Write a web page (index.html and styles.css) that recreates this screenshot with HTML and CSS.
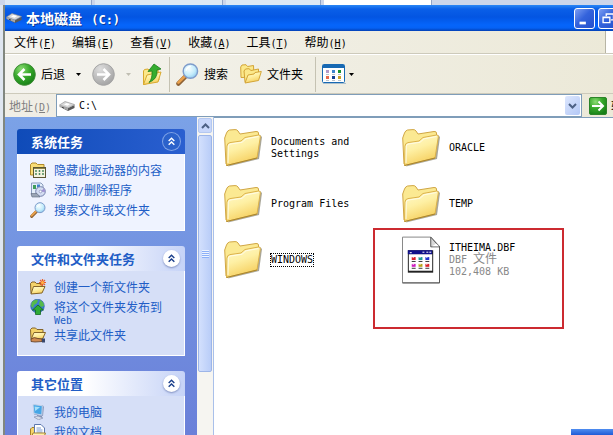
FILE: index.html
```html
<!DOCTYPE html>
<html lang="zh-CN">
  <head>
    <meta charset="utf-8" />
    <title>本地磁盘 (C:)</title>
    <link rel="stylesheet" href="styles.css">
  </head>
  <body>
    <!-- Shared icons -->
    <svg class="defs" width="0" height="0" aria-hidden="true">
      <defs>
        <linearGradient id="yellow" x1="0" y1="0" x2="0.4" y2="1">
          <stop offset="0" stop-color="#fffad0" />
          <stop offset="0.5" stop-color="#fef0a4" />
          <stop offset="1" stop-color="#f6d060" />
        </linearGradient>
        <radialGradient id="green" cx="0.35" cy="0.25" r="0.8">
          <stop offset="0" stop-color="#8bdc73" />
          <stop offset="0.5" stop-color="#37a82b" />
          <stop offset="1" stop-color="#167f16" />
        </radialGradient>
        <radialGradient id="gray" cx="0.35" cy="0.25" r="0.8">
          <stop offset="0" stop-color="#dedede" />
          <stop offset="0.6" stop-color="#bababa" />
          <stop offset="1" stop-color="#a2a2a2" />
        </radialGradient>
        <radialGradient id="glass" cx="0.4" cy="0.35" r="0.7">
          <stop offset="0" stop-color="#f6fdff" />
          <stop offset="0.6" stop-color="#c4ecfb" />
          <stop offset="1" stop-color="#8cc8ee" />
        </radialGradient>
        <symbol id="folder" viewBox="0 0 38 38">
          <path d="M4 37.500 L35 30 L38 8 L36 6 Z" fill="#6f6a55" opacity="0.6" />
          <path d="M2 35 L0.700 9 L2.500 4 Q3.500 1.500 5.500 1 L11 0.600 Q13 0.500 14 2 L16 5 L32 2.500 Q34.500 2.300 34.500 4 L34.500 9 L31 28 Z" fill="#fbe992" stroke="#d0a645" />
          <path d="M2.500 36.500 L3 17 Q3.200 14 6 13.600 L17 12 L21 8.500 L34.500 6 Q36.700 5.700 36.300 8 L33 29 Z" fill="url(#yellow)" stroke="#dcb24a" />
          <path d="M4 34 L4.300 17 Q4.700 15.200 7 14.900 L18 13.300 L22 9.800 L34.500 7.500" fill="none" stroke="#fffce6" />
          <path d="M2.500 36.500 L33 29" stroke="#a8842e" />
        </symbol>
        <symbol id="drive" viewBox="0 0 16 12">
          <path d="M0.500 6 L6 9.500 L9 11 L15.500 8 L15.500 5 L9 8 Z" fill="#595959" />
          <path d="M0.500 5 L6 1.500 L15.500 4.500 L9 8 Z" fill="#d8d8d8" stroke="#8b8b8b" stroke-width="0.600" />
          <path d="M0.500 5 L9 8 L9 10.500 L0.500 7 Z" fill="#a7a7a7" />
          <path d="M5 4.500 L7.500 3 L11 4 L8.500 5.700 Z" fill="#fff" />
          <path d="M3 7.300 L5 8.100" stroke="#444" />
        </symbol>
        <symbol id="search" viewBox="0 0 24 24">
          <path d="M2.500 21.500 L9.500 14.500" stroke="#8d6134" stroke-width="4.500" stroke-linecap="round" />
          <path d="M2.500 20.500 L9.500 13.500" stroke="#e9a04c" stroke-width="2.800" stroke-linecap="round" />
          <circle cx="15" cy="8.500" r="7.500" fill="url(#glass)" stroke="#7f9ccb" stroke-width="1.500" />
          <path d="M10.500 8 Q11.500 4 15.500 3.500" fill="none" stroke="#fff" stroke-width="1.500" />
        </symbol>
        <symbol id="down" viewBox="0 0 5 3">
          <path d="M0 0 H5 L2.500 3 Z" fill="currentColor" />
        </symbol>
        <symbol id="collapse" viewBox="0 0 18 18">
          <path d="M6 8.500 L9 5.500 L12 8.500 M6 12.500 L9 9.500 L12 12.500" fill="none" stroke="currentColor" stroke-width="1.500" />
        </symbol>
      </defs>
    </svg>

    <div class="tabs">
      <span class="tab tab-first"></span>
      <span class="tab tab-wide"></span>
      <span class="tab"></span>
      <span class="tab active"></span>
    </div>

    <div class="window">
      <header class="titlebar">
        <svg class="title-icon"><use href="#drive" /></svg>
        <h1>本地磁盘 <span class="title-drive">(C:)</span></h1>
        <button class="win-btn" aria-label="最小化">
          <svg viewBox="0 0 21 21"><path d="M5 14 h7 v3 h-7 z" fill="#fff" /></svg>
        </button>
        <button class="win-btn" aria-label="还原">
          <svg viewBox="0 0 21 21">
            <path d="M8 8 V5.500 H16 V12 H13" fill="none" stroke="#fff" stroke-width="1.500" />
            <path d="M4.500 9 H12 V15 H4.500 Z M4.500 9.500 H12" fill="none" stroke="#fff" stroke-width="1.500" />
          </svg>
        </button>
      </header>

      <nav class="menubar">
        <button>文件<span class="latin">(<u>F</u>)</span></button>
        <button>编辑<span class="latin">(<u>E</u>)</span></button>
        <button>查看<span class="latin">(<u>V</u>)</span></button>
        <button>收藏<span class="latin">(<u>A</u>)</span></button>
        <button>工具<span class="latin">(<u>T</u>)</span></button>
        <button>帮助<span class="latin">(<u>H</u>)</span></button>
        <span class="brand"></span>
      </nav>

      <div class="toolbar">
        <button class="tool">
          <svg class="nav-icon" viewBox="0 0 23 23">
            <circle cx="11.500" cy="11.500" r="10.800" fill="url(#green)" stroke="#3d8c35" />
            <path d="M18 11.500 H6 M11.500 6 L6 11.500 L11.500 17" fill="none" stroke="#fff" stroke-width="2.600" />
          </svg>
          后退
        </button>
        <button class="drop" aria-label="后退列表"><svg><use href="#down" /></svg></button>
        <button class="tool" aria-label="前进" disabled>
          <svg class="nav-icon" viewBox="0 0 23 23">
            <circle cx="11.500" cy="11.500" r="10.800" fill="url(#gray)" stroke="#a5a5a5" />
            <path d="M5 11.500 H17 M11.500 6 L17 11.500 L11.500 17" fill="none" stroke="#fff" stroke-width="2.600" />
          </svg>
        </button>
        <button class="drop" aria-label="前进列表" disabled><svg><use href="#down" /></svg></button>
        <button class="tool" aria-label="向上">
          <svg class="up-icon" viewBox="0 0 21 23">
            <path d="M1.500 21.500 L1.500 8 L2.500 6.500 L6 6 L8 8 L16 6.500 L17 17 Z" fill="#fbe88a" stroke="#d9a92e" />
            <path d="M1.500 21.500 L5 12 L19 9 L16 19 Z" fill="url(#yellow)" stroke="#d9a92e" />
            <path d="M7 19.500 Q10.500 16 10 8 L6 8.500 L12 1 L19 6 L15 7 Q16 16 7 19.500 Z" fill="#35ad2f" stroke="#1b7c1a" stroke-width="0.800" />
          </svg>
        </button>
        <span class="sep"></span>
        <button class="tool">
          <svg class="search-icon"><use href="#search" /></svg>
          搜索
        </button>
        <button class="tool folders">
          <svg class="folders-icon" viewBox="0 0 22 20">
            <path d="M1 13.500 L0.700 3 L2 1 L6 0.700 L7.500 2.500 L13.500 1.500 L14 13 Z" fill="#fbe88a" stroke="#d3a436" />
            <path d="M5 18 L4 7 L5.500 5 L9 4.700 L11 6.500 L18.500 5 L18.500 15 Z" fill="#fbe88a" stroke="#d3a436" />
            <path d="M5 19 L8 11 L14 10 L15 8.500 L21.300 7.500 L18.500 16.500 Z" fill="url(#yellow)" stroke="#d3a436" />
          </svg>
          文件夹
        </button>
        <span class="sep"></span>
        <button class="tool" aria-label="查看方式">
          <svg class="views-icon" viewBox="0 0 24 20">
            <rect x="0.500" y="0.500" width="22" height="18" rx="1" fill="#fff" stroke="#1769b3" />
            <path d="M1 1 h21 v3 H1 z" fill="#1769b3" />
            <path d="M1 19.500 H24" stroke="#a9bfce" />
            <path d="M4 6 h3 v3 h-3 z" fill="#b39ac8" />
            <path d="M10 6 h3 v3 h-3 z" fill="#3d86cf" />
            <path d="M16 6 h3 v3 h-3 z" fill="#179333" />
            <path d="M4 12 h3 v3 h-3 z" fill="#e76a4c" />
            <path d="M10 12 h3 v3 h-3 z" fill="#123f91" />
            <path d="M16 12 h3 v3 h-3 z" fill="#c9a02a" />
            <path d="M4 10.500 h3 M10 10.500 h3 M16 10.500 h3 M4 16.500 h3 M10 16.500 h3 M16 16.500 h3" stroke="#b9c3cc" />
          </svg>
        </button>
        <button class="drop small" aria-label="查看方式列表"><svg><use href="#down" /></svg></button>
      </div>

      <div class="addressbar">
        <label for="address">地址<span class="latin">(<u>D</u>)</span></label>
        <div class="combo">
          <svg class="combo-icon"><use href="#drive" /></svg>
          <input type="text" id="address" value="C:\" />
          <button class="combo-btn" aria-label="展开">
            <svg viewBox="0 0 9 6"><path d="M1 1 L4.500 4.500 L8 1" fill="none" stroke="#4d6185" stroke-width="2" /></svg>
          </button>
        </div>
        <button class="go">
          <svg viewBox="0 0 18 18">
            <rect x="0.500" y="0.500" width="17" height="17" rx="1.500" fill="url(#green)" stroke="#2c8428" />
            <path d="M3 9 H14 M9.500 4.500 L14 9 L9.500 13.500" fill="none" stroke="#fff" stroke-width="2" />
          </svg>
          转到
        </button>
      </div>

      <div class="main">
        <aside class="sidebar">
          <section class="panel primary">
            <header>
              <h2>系统任务</h2>
              <button class="collapse" aria-label="折叠"><svg><use href="#collapse" /></svg></button>
            </header>
            <ul>
              <li>
                <svg viewBox="0 0 16 16">
                  <path d="M0.500 13 V2.500 L2 1 H6 L7.500 2.500 H14 V13 Z" fill="#f9dd76" stroke="#b08a2c" />
                  <rect x="3.500" y="5.500" width="12" height="10" fill="#f5f3df" stroke="#5d5734" />
                  <path d="M4 6.500 H15" stroke="#8f8648" />
                  <path d="M6 8 v6 M9.500 8 v6 M13 8 v6" stroke="#4f8c60" stroke-width="1.500" stroke-dasharray="2 1" />
                </svg>
                <a href="#">隐藏此驱动器的内容</a>
              </li>
              <li>
                <svg viewBox="0 0 16 16">
                  <path d="M1.500 1 H11 L13 3 V13 H1.500 Z" fill="#e4eefa" stroke="#8b9dbd" />
                  <path d="M3 3 h3 v4 h-3 z" fill="#3f9d5a" />
                  <path d="M7 2.500 h3 v3 h-3 z" fill="#3f83cf" />
                  <circle cx="10.500" cy="9.500" r="4.800" fill="#d3dcf1" stroke="#7581ac" />
                  <path d="M10.500 9.500 L14 6.500 A4.500 4.500 0 0 1 15 10 Z" fill="#9f90d2" />
                  <circle cx="10.500" cy="9.500" r="1.300" fill="#fff" stroke="#7581ac" stroke-width="0.600" />
                  <path d="M1 11.500 h6 l3 3.500 h-8 z" fill="#9ba5b5" stroke="#5d687c" stroke-width="0.600" />
                </svg>
                <a href="#">添加<span class="latin">/</span>删除程序</a>
              </li>
              <li>
                <svg><use href="#search" /></svg>
                <a href="#">搜索文件或文件夹</a>
              </li>
            </ul>
          </section>

          <section class="panel">
            <header>
              <h2>文件和文件夹任务</h2>
              <button class="collapse" aria-label="折叠"><svg><use href="#collapse" /></svg></button>
            </header>
            <ul>
              <li>
                <svg viewBox="0 0 16 16">
                  <path d="M1 14.500 L0.500 4.500 L2 3 H5 L6.500 4.500 H12 V13 Z" fill="#f4d36a" stroke="#85652a" />
                  <path d="M1 15 L3.500 7.500 H15 L12 14 Z" fill="url(#yellow)" stroke="#85652a" />
                  <path d="M12.500 0 V7 M9 3.500 H16 M10 1 L15 6 M15 1 L10 6" stroke="#e8602a" stroke-width="1.200" />
                  <circle cx="12.500" cy="3.500" r="1.500" fill="#ffb347" />
                </svg>
                <a href="#">创建一个新文件夹</a>
              </li>
              <li>
                <svg viewBox="0 0 16 16">
                  <circle cx="7.500" cy="7" r="6.800" fill="#3c7ed0" stroke="#22529a" stroke-width="0.600" />
                  <path d="M2 3 Q5 0 8 1 L7 4 L4 6 L3 9 L1 7 Z M10 1 Q14 3 14 7 L11 8 L9 5 Z" fill="#56bb4a" />
                  <path d="M8 6 L13.500 11 H10.500 V15.500 H5.500 V11 H2.500 Z" fill="#2eaa36" stroke="#126a20" stroke-width="0.800" />
                </svg>
                <a href="#">将这个文件夹发布到<span class="latin"> Web</span></a>
              </li>
              <li>
                <svg viewBox="0 0 16 16">
                  <path d="M1 12 L0.500 2.500 L2 1 H5.500 L7 2.500 H13 V11 Z" fill="#f4d36a" stroke="#85652a" />
                  <path d="M1 12.500 L4 5.500 H15.500 L12.500 12 Z" fill="url(#yellow)" stroke="#85652a" />
                  <path d="M1 12 Q4 9.500 8 11.500 L12 12 V14.500 L5 15 L1 14.500 Z" fill="#cf8a4f" stroke="#5a3a22" stroke-width="0.800" />
                  <path d="M12 11.500 h3 v4 h-3 z" fill="#39476c" />
                </svg>
                <a href="#">共享此文件夹</a>
              </li>
            </ul>
          </section>

          <section class="panel">
            <header>
              <h2>其它位置</h2>
              <button class="collapse" aria-label="折叠"><svg><use href="#collapse" /></svg></button>
            </header>
            <ul>
              <li>
                <svg viewBox="0 0 16 16">
                  <path d="M3 0.500 L13 1.500 L14 3 L13 12 L4 10.500 Z" fill="#8c9cc0" />
                  <path d="M3 0.500 L12.300 1.700 L11.800 11 L4 9.500 Z" fill="#46a6e6" stroke="#c3d2ea" />
                  <path d="M4.500 2.500 L10 3.200 L5.200 7 Z" fill="#a6e0fa" />
                  <path d="M7 11 L12 12 V14 L7 13 Z" fill="#8593b8" />
                  <path d="M4 13 L8 12 L13 14 L8.500 15.800 Z" fill="#d5dbe8" stroke="#7887a8" stroke-width="0.600" />
                </svg>
                <a href="#">我的电脑</a>
              </li>
              <li>
                <svg viewBox="0 0 16 16">
                  <path d="M0.500 14 V5 L2 3.500 H5 V14 Z" fill="#f7d56b" stroke="#a3802c" />
                  <path d="M4.500 0.500 H11 L14.500 4 V12 H4.500 Z" fill="#fff" stroke="#5d78ae" />
                  <path d="M6.500 4 H11 M6.500 6 H12.500 M6.500 8 H12.500" stroke="#7c9bd0" />
                  <path d="M1 14.500 L3 9 H15.500 L13.500 14.500 Z" fill="url(#yellow)" stroke="#a3802c" />
                </svg>
                <a href="#">我的文档</a>
              </li>
            </ul>
          </section>
        </aside>

        <div class="scrollbar">
          <button class="scroll-up" aria-label="向上滚动">
            <svg viewBox="0 0 9 6"><path d="M1 5 L4.500 1.500 L8 5" fill="none" stroke="#4d6185" stroke-width="2" /></svg>
          </button>
          <div class="thumb"><span class="grip"></span></div>
        </div>

        <main class="files">
          <ul class="file-grid">
            <li>
              <svg class="folder"><use href="#folder" /></svg>
              <span class="name">Documents and Settings</span>
            </li>
            <li>
              <svg class="folder"><use href="#folder" /></svg>
              <span class="name">ORACLE</span>
            </li>
            <li>
              <svg class="folder"><use href="#folder" /></svg>
              <span class="name">Program Files</span>
            </li>
            <li>
              <svg class="folder"><use href="#folder" /></svg>
              <span class="name">TEMP</span>
            </li>
            <li>
              <svg class="folder"><use href="#folder" /></svg>
              <span class="name focused">WINDOWS</span>
            </li>
            <li>
              <svg class="doc" viewBox="0 0 39 48">
                <path d="M0.500 0.500 H29.500 L38.500 10 V47.500 H0.500 Z" fill="#fff" stroke="#858585" />
                <path d="M38.500 10 V47.500 H0.500" fill="none" stroke="#555" />
                <path d="M29.500 0.500 V10.500 H38.500 Z" fill="#d9d9d9" stroke="#555" />
                <path d="M31 10 L38 10 L35 7 Z" fill="#fff" />
                <rect x="6" y="14" width="26" height="23" fill="#222" />
                <rect x="7" y="18" width="24" height="17" fill="#fff" />
                <path d="M6 14 h25 v4 h-25 z" fill="#10108a" />
                <path d="M8 16.500 h2 M21 16 h2 M25 16 h2 M28 16 h2" stroke="#fff" />
                <path d="M10 21 h4 v3 h-4 z" fill="#d9222a" />
                <path d="M17 21 h4 v3 h-4 z" fill="#1e9a9a" />
                <path d="M24 21 h4 v3 h-4 z" fill="#2233cc" />
                <path d="M10 28 h4 v3 h-4 z" fill="#d01fc0" />
                <path d="M17 28 h4 v3 h-4 z" fill="#b8a51c" />
                <path d="M24 28 h4 v3 h-4 z" fill="#d9222a" />
                <path d="M10 25.500 h4 M17 25.500 h4 M24 25.500 h4 M10 32.500 h4 M17 32.500 h4 M24 32.500 h4" stroke="#333" />
                <path d="M11 21.500 h1 M18 21.500 h1 M25 21.500 h1 M11 28.500 h1 M18 28.500 h1 M25 28.500 h1" stroke="#fff" />
              </svg>
              <span class="name">
                ITHEIMA.DBF
                <span class="meta">DBF <span class="cjk">文件</span></span>
                <span class="meta">102,408 KB</span>
              </span>
            </li>
          </ul>
          <div class="marker"></div>
        </main>
      </div>
    </div>

    <div class="taskbar"></div>
  </body>
</html>
```

FILE: styles.css
```css
* {
  box-sizing: border-box;
}
body {
  display: flex;
  flex-direction: column;
  height: 100vh;
  margin: 0;
  overflow: hidden;
  position: relative;
  background: #dfe6f0;
  color: #000;
  font: 12px/12px "Noto Sans CJK SC", sans-serif;
}
h1,
h2,
ul {
  margin: 0;
  padding: 0;
  list-style: none;
}
button {
  flex: none;
  padding: 0;
  border: 0;
  background: none;
  color: inherit;
  font: inherit;
}
svg {
  display: block;
  flex: none;
}
.defs {
  position: absolute;
}
/* zero line height keeps the mixed fonts on a 12px line */
.latin {
  font: 10px/0 "DejaVu Sans Mono", monospace;
}
.cjk {
  font: 12px/0 "Noto Sans CJK SC", sans-serif;
}

/* tabs of the window behind */
.tabs {
  display: flex;
  flex: none;
  gap: 3px;
  height: 5px;
  padding-left: 5px;
  background: #ccd6ea;
}
.tab {
  width: 95px;
  background: #dce8f4;
  border-right: 1px solid #93a5c6;
}
.tab-first {
  width: 87px;
}
.tab-wide {
  width: 128px;
}
.tab.active {
  width: 108px;
  background: #fff;
}

/* the bars are clipped at the right edge of the screen */
.window {
  display: flex;
  flex: 1;
  flex-direction: column;
  min-height: 0;
  margin-left: 3px;
  overflow: hidden;
  border-left: 2px solid #81877f;
  background: #ece9d8;
}
.titlebar {
  display: flex;
  flex: none;
  align-items: center;
  gap: 3px;
  height: 26px;
  margin-right: -6px;
  padding-left: 1px;
  background: linear-gradient(#2a87f5 0, #0a5fe8 4px, #0355e2 12px, #0565fb 20px, #0562f5 23px, #0340b5 26px);
  color: #fff;
}
.title-icon {
  width: 16px;
  height: 12px;
}
.titlebar h1 {
  flex: 1;
  margin-left: 1px;
  font-size: 14px;
  line-height: 16px;
  text-shadow: 1px 1px #0a3a9c;
}
.title-drive {
  margin-left: 6px;
  font: bold 12px/0 "DejaVu Sans Mono", monospace;
}
.win-btn {
  width: 21px;
  height: 21px;
  border: 1px solid #fff;
  border-radius: 3px;
  background: linear-gradient(135deg, #7d9ef2, #3463dc 45%, #2450cc);
}

.menubar {
  display: flex;
  flex: none;
  height: 23px;
  padding-left: 1px;
  border-bottom: 1px solid #cdcabb;
  background: linear-gradient(90deg, #f4f3ee, #ece9d8);
}
.menubar button {
  padding: 0 8px;
}
.brand {
  width: 8px;
  margin-left: auto;
  border-left: 1px solid #b8b5a5;
  background: #fff;
}

.toolbar {
  display: flex;
  flex: none;
  align-items: center;
  height: 40px;
  padding-left: 8px;
  border-top: 1px solid #fff;
  border-bottom: 1px solid #cdcabb;
  background: linear-gradient(90deg, #f4f3ee, #ece9d8);
}
.tool {
  display: flex;
  align-items: center;
  gap: 5px;
}
.nav-icon {
  width: 23px;
  height: 23px;
}
.up-icon {
  width: 21px;
  height: 23px;
}
.search-icon {
  width: 23px;
  height: 23px;
}
.folders {
  margin-left: 12px;
}
.folders-icon {
  width: 22px;
  height: 20px;
}
.views-icon {
  width: 24px;
  height: 20px;
}
.drop {
  display: flex;
  justify-content: center;
  width: 27px;
}
.drop.small {
  width: 10px;
}
.drop:disabled {
  color: #c0beb2;
}
.drop svg {
  width: 5px;
  height: 3px;
}
.sep {
  width: 1px;
  height: 35px;
  margin: 0 6px;
  background: #c5c2b2;
}
.folders + .sep {
  margin-left: 12px;
}

.addressbar {
  display: flex;
  flex: none;
  align-items: center;
  gap: 7px;
  height: 23px;
  margin-right: -22px;
  padding-left: 4px;
  background: linear-gradient(90deg, #f0eee6, #ece9d8);
}
.addressbar label {
  width: 40px;
  color: #808080;
  white-space: nowrap;
}
.combo {
  display: flex;
  flex: 1;
  align-items: center;
  gap: 4px;
  height: 23px;
  padding: 1px 1px 1px 2px;
  border: 1px solid #7f9db9;
  background: #fff;
}
.combo-icon {
  width: 16px;
  height: 12px;
}
.combo input {
  flex: 1;
  min-width: 0;
  padding: 0;
  border: 0;
  outline: 0;
  font: 10px/12px "DejaVu Sans Mono", monospace;
}
.combo-btn {
  display: flex;
  align-items: center;
  justify-content: center;
  width: 15px;
  height: 19px;
  border-radius: 2px;
  background: linear-gradient(135deg, #dde7fe, #b3c8f6);
}
.combo-btn svg,
.scroll-up svg {
  width: 9px;
  height: 6px;
}
.go {
  display: flex;
  align-items: center;
  gap: 4px;
}
.go svg {
  width: 18px;
  height: 18px;
}

.main {
  display: flex;
  flex: 1;
  min-height: 0;
}
.sidebar {
  display: flex;
  flex: none;
  flex-direction: column;
  gap: 15px;
  width: 192px;
  padding: 12px 12px 0;
  overflow: hidden;
  background: linear-gradient(#7ba2e7, #6a80d9);
}
.panel {
  flex: none;
  color: #215dc6;
}
.panel header {
  display: flex;
  align-items: center;
  justify-content: space-between;
  height: 25px;
  padding: 0 5px 0 14px;
  border-radius: 3px 3px 0 0;
  background: linear-gradient(90deg, #fff 40%, #c6d3f7);
}
.panel h2 {
  font-size: 13px;
  line-height: 16px;
}
.panel ul {
  display: flex;
  flex-direction: column;
  gap: 2px;
  padding: 8px 20px 10px 12px;
  border: 1px solid #fff;
  border-top: 0;
  background: #d6dff7;
}
.panel li {
  display: flex;
  gap: 8px;
  min-height: 18px;
}
.panel li svg {
  width: 16px;
  height: 16px;
}
.panel a {
  padding-top: 2px;
  color: #215dc6;
  text-decoration: none;
}
.primary header {
  background: linear-gradient(90deg, #0f4bb8, #2a5fd0);
  color: #fff;
}
.primary ul {
  background: #eff3ff;
}
.collapse {
  border-radius: 50%;
  background: #fff;
  box-shadow: 0 1px 2px #7f8fc0;
  color: #1b3f8b;
}
.collapse svg {
  width: 17px;
  height: 17px;
}
.primary .collapse {
  background: #2b62cb;
  box-shadow: 0 0 0 1px #7fa3e6;
  color: #fff;
}

.scrollbar {
  display: flex;
  flex: none;
  flex-direction: column;
  gap: 2px;
  width: 17px;
  padding: 1px;
  border-right: 1px solid #a9c0ea;
  background: #f6f5f1;
}
.scroll-up {
  display: flex;
  align-items: center;
  justify-content: center;
  height: 15px;
  border: 1px solid #b4c8f0;
  border-radius: 2px;
  background: #c8d7fb;
}
.thumb {
  display: flex;
  align-items: center;
  justify-content: center;
  height: 75%;
  border: 1px solid #9db5e8;
  border-radius: 2px;
  background: linear-gradient(90deg, #d3e0fd, #b9cdf8);
}
.grip {
  width: 7px;
  height: 8px;
  background: repeating-linear-gradient(#eef4fe 0 1px, #8cb0f8 1px 2px);
}

.files {
  flex: 1;
  min-width: 0;
  position: relative;
  border-top: 1px solid #7f9db9;
  background: #fff;
}
.file-grid {
  display: grid;
  grid-template-columns: 178px 178px;
  grid-auto-rows: 56px;
  padding: 2px 0 0 10px;
}
.file-grid li {
  display: flex;
  align-items: center;
  gap: 9px;
}
.folder {
  width: 38px;
  height: 38px;
}
.doc {
  width: 38px;
  height: 48px;
}
.name {
  max-width: 90px;
  font: 10px/12px "DejaVu Sans Mono", monospace;
}
.focused {
  outline: 1px dotted #000;
}
.meta {
  display: block;
  color: #888;
}
.marker {
  position: absolute;
  top: 110px;
  left: 159px;
  width: 191px;
  height: 101px;
  border: 2px solid #cc2a30;
  pointer-events: none;
}

.taskbar {
  position: absolute;
  right: 0;
  bottom: 0;
  width: 42px;
  height: 6px;
  background: linear-gradient(#4f8df0, #1f5ad6);
}
```
